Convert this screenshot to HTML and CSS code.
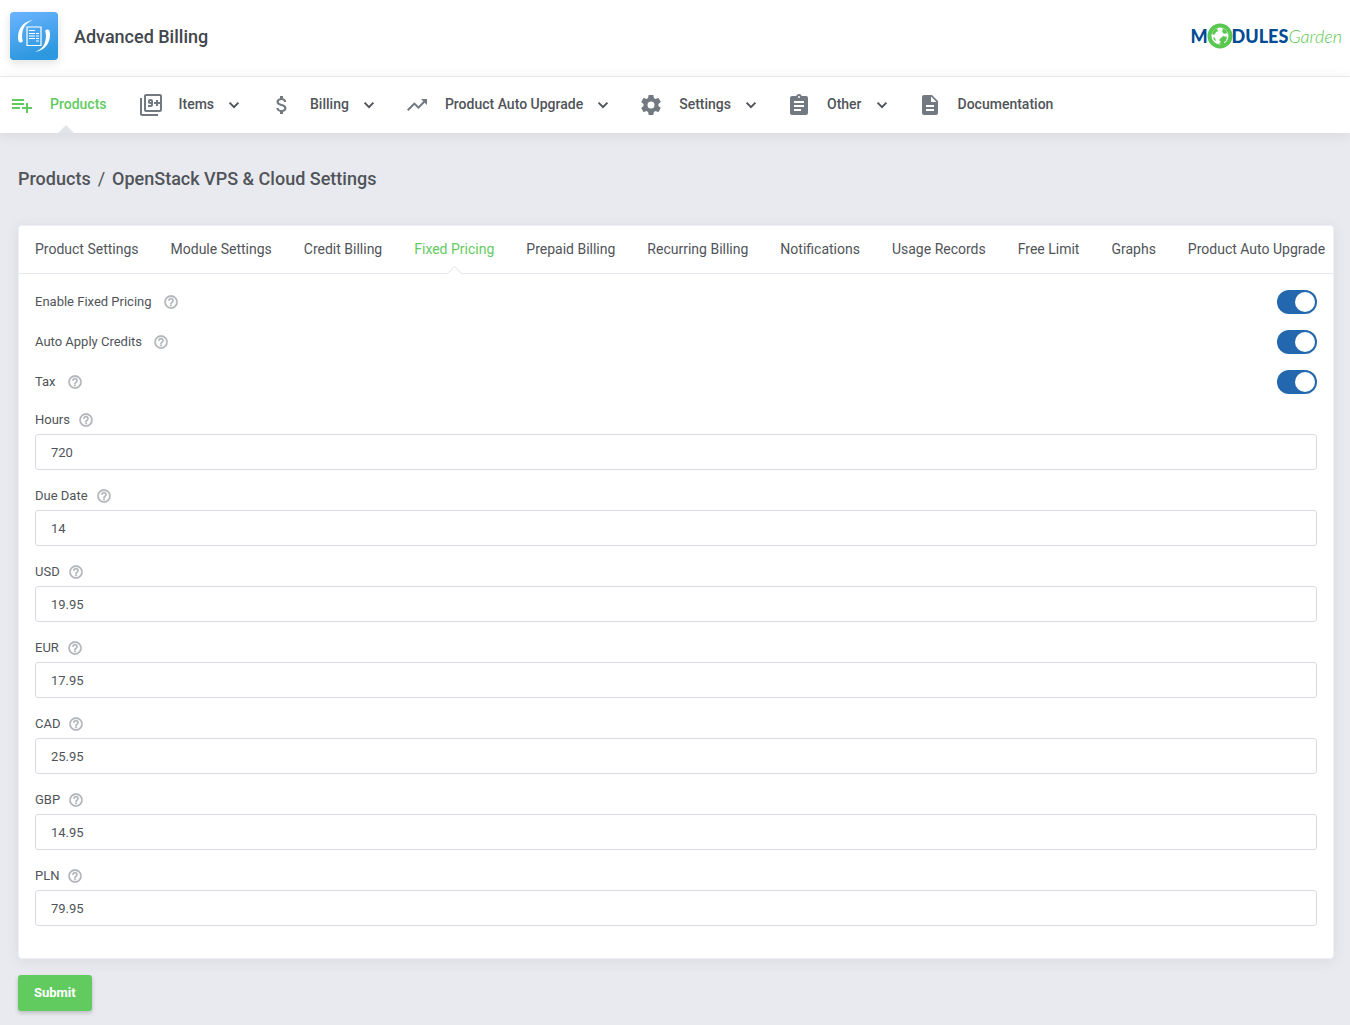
FILE: index.html
```html
<!doctype html>
<html lang="en">
<head>
    <meta charset="UTF-8">
    <title>Advanced Billing</title>
    <link rel="stylesheet" href="styles.css">
</head>

<body>
<svg class="sprite" aria-hidden="true">
    <symbol id="chevron" viewBox="0 0 24 24"><path d="M8.200 9 12 12.800 15.800 9l1.300 1.300-5.100 5.100-5.100-5.100z"/></symbol>
    <symbol id="help" viewBox="0 0 24 24"><path stroke="currentColor" stroke-width=".6" d="M11 18h2v-2h-2v2zm1-16a10 10 0 1 0 0 20 10 10 0 0 0 0-20zm0 18a8 8 0 1 1 0-16 8 8 0 0 1 0 16zm0-14a4 4 0 0 0-4 4h2a2 2 0 1 1 4 0c0 2-3 1.750-3 5h2c0-2.250 3-2.500 3-5a4 4 0 0 0-4-4z"/></symbol>
</svg>

<header class="header">
    <div class="brand">
        <svg class="brand-icon" viewBox="0 0 48 48" aria-hidden="true">
            <defs>
                <linearGradient id="brand-bg" x1="0" y1="0" x2=".3" y2="1">
                    <stop offset="0" stop-color="#6bb4ff"/>
                    <stop offset="1" stop-color="#2d98df"/>
                </linearGradient>
            </defs>
            <rect width="48" height="48" rx="3" fill="url(#brand-bg)"/>
            <g fill="#fff">
                <path d="M23 8.300C14 9 8 16 8 25c0 2 .3 3.500.8 4.700.8 1.300 3.700 1 4-.7-.4-1.300-.9-3.500-.7-6C12.500 16 16 10.500 23 8.300z"/>
                <path d="M25 39.700C34 39 40 32 40 23c0-2-.3-3.500-.8-4.700-.8-1.300-3.700-1-4 .7.4 1.300.9 3.500.7 6C35.500 32 32 37.500 25 39.700z"/>
                <path d="M19 18h6v1h-6zm0 3h6v1h-6zm0 2.500h6v1h-6zm0 2.500h6v1h-6zm7-5h3v1h-3zm0 2.500h3v1h-3zm0 2.500h3v1h-3zm0 2.500h3v1h-3z"/>
            </g>
            <path d="M17 15h14v18.500H17z" fill="none" stroke="#fff" stroke-width="1.200"/>
        </svg>
        <span class="brand-name">Advanced Billing</span>
    </div>
    <a class="logo" href="#">
        <span class="logo-bold">M</span>
        <svg class="logo-globe" viewBox="0 0 26 26" aria-hidden="true">
            <circle cx="13" cy="13" r="10.500" fill="#fff" stroke="#5ac850" stroke-width="4"/>
            <path fill="#5ac850" d="M5 10l3-4 3-1-1 2 2 1-3 1-1 2-2 1zM15 5l4 2 2 4-2-1-1 1-2-1-1-2 1-1zM14 15l2-2 4 1-1 4-2 1v2l-3 1-2-2 2-1-2-2zM6 14l2 1 1 3-2-1z"/>
        </svg>
        <span class="logo-bold">DULES</span><span class="logo-thin">Garden</span>
    </a>
</header>

<nav class="nav">
    <a class="nav-item active" href="#">
        <svg class="nav-icon" viewBox="0 0 24 24"><path d="M14 10H2v2h12v-2zm0-4H2v2h12V6zm4 8v-4h-2v4h-4v2h4v4h2v-4h4v-2h-4zM2 16h8v-2H2v2z"/></svg>
        <span class="nav-label">Products</span>
    </a>
    <a class="nav-item" href="#">
        <svg class="nav-icon" viewBox="0 0 24 24"><path d="M3 5H1v16c0 1.100.9 2 2 2h16v-2H3V5zm11 7V8a2 2 0 0 0-2-2h-1a2 2 0 0 0-2 2v1c0 1.100.9 2 2 2h1v1H9v2h3a2 2 0 0 0 2-2zm-3-3V8h1v1h-1zm10-8H7a2 2 0 0 0-2 2v14c0 1.100.9 2 2 2h14a2 2 0 0 0 2-2V3a2 2 0 0 0-2-2zm0 8h-2V7h-2v2h-2v2h2v2h2v-2h2v6H7V3h14v6z"/></svg>
        <span class="nav-label">Items</span>
        <svg class="nav-arrow"><use href="#chevron"/></svg>
    </a>
    <a class="nav-item" href="#">
        <svg class="nav-icon" viewBox="0 0 24 24"><path d="M11.800 10.900c-2.270-.59-3-1.200-3-2.150 0-1.090 1.010-1.850 2.700-1.850 1.780 0 2.440.85 2.500 2.100h2.210c-.07-1.720-1.120-3.300-3.210-3.810V3h-3v2.160c-1.940.42-3.500 1.680-3.500 3.610 0 2.310 1.910 3.460 4.700 4.130 2.500.6 3 1.480 3 2.410 0 .69-.49 1.790-2.700 1.790-2.060 0-2.870-.92-2.980-2.100h-2.200c.12 2.190 1.760 3.420 3.680 3.830V21h3v-2.150c1.950-.37 3.500-1.500 3.500-3.550 0-2.840-2.430-3.810-4.700-4.400z"/></svg>
        <span class="nav-label">Billing</span>
        <svg class="nav-arrow"><use href="#chevron"/></svg>
    </a>
    <a class="nav-item" href="#">
        <svg class="nav-icon" viewBox="0 0 24 24"><path d="M16 6l2.290 2.290-4.880 4.880-4-4L2 16.590 3.410 18l6-6 4 4 6.300-6.290L22 12V6z"/></svg>
        <span class="nav-label">Product Auto Upgrade</span>
        <svg class="nav-arrow"><use href="#chevron"/></svg>
    </a>
    <a class="nav-item" href="#">
        <svg class="nav-icon" viewBox="0 0 24 24"><path d="M19.430 12.980c.04-.32.07-.64.07-.98s-.03-.66-.07-.98l2.110-1.650c.19-.15.24-.42.12-.64l-2-3.460c-.12-.22-.39-.3-.61-.22l-2.490 1c-.52-.4-1.080-.73-1.690-.98l-.38-2.650C14.460 2.180 14.250 2 14 2h-4c-.25 0-.46.18-.49.42l-.38 2.650c-.61.25-1.170.59-1.690.98l-2.490-1c-.23-.09-.49 0-.61.22l-2 3.460c-.13.22-.07.49.12.64l2.110 1.650c-.04.32-.07.65-.07.98s.03.66.07.98l-2.110 1.650c-.19.15-.24.42-.12.64l2 3.460c.12.22.39.3.61.22l2.490-1c.52.4 1.080.73 1.690.98l.38 2.650c.03.24.24.42.49.42h4c.25 0 .46-.18.49-.42l.38-2.650c.61-.25 1.170-.59 1.690-.98l2.490 1c.23.09.49 0 .61-.22l2-3.460c.12-.22.07-.49-.12-.64l-2.110-1.650zM12 15.500a3.500 3.500 0 1 1 0-7 3.500 3.500 0 0 1 0 7z"/></svg>
        <span class="nav-label">Settings</span>
        <svg class="nav-arrow"><use href="#chevron"/></svg>
    </a>
    <a class="nav-item" href="#">
        <svg class="nav-icon" viewBox="0 0 24 24"><path d="M19 3h-4.180a3 3 0 0 0-5.640 0H5a2 2 0 0 0-2 2v15a2 2 0 0 0 2 2h14a2 2 0 0 0 2-2V5a2 2 0 0 0-2-2zm-7 0a1 1 0 1 1 0 2 1 1 0 0 1 0-2zm2 15H7v-2h7v2zm3-4H7v-2h10v2zm0-4H7V8h10v2z"/></svg>
        <span class="nav-label">Other</span>
        <svg class="nav-arrow"><use href="#chevron"/></svg>
    </a>
    <a class="nav-item" href="#">
        <svg class="nav-icon" viewBox="0 0 24 24"><path d="M14 2H6a2 2 0 0 0-2 2v16a2 2 0 0 0 2 2h12a2 2 0 0 0 2-2V8l-6-6zm2 16H8v-2h8v2zm0-4H8v-2h8v2zm-3-5V3.500L18.500 9H13z"/></svg>
        <span class="nav-label">Documentation</span>
    </a>
</nav>

<main class="main">
    <h1 class="breadcrumb"><a href="#">Products</a><span class="separator">/</span><span>OpenStack VPS &amp; Cloud Settings</span></h1>

    <form>
        <div class="card">
            <div class="tabs">
                <a class="tab" href="#">Product Settings</a>
                <a class="tab" href="#">Module Settings</a>
                <a class="tab" href="#">Credit Billing</a>
                <a class="tab active" href="#">Fixed Pricing</a>
                <a class="tab" href="#">Prepaid Billing</a>
                <a class="tab" href="#">Recurring Billing</a>
                <a class="tab" href="#">Notifications</a>
                <a class="tab" href="#">Usage Records</a>
                <a class="tab" href="#">Free Limit</a>
                <a class="tab" href="#">Graphs</a>
                <a class="tab" href="#">Product Auto Upgrade</a>
            </div>

            <div class="card-body">
                <div class="switch-row">
                    <label for="enable">Enable Fixed Pricing</label>
                    <svg class="help"><use href="#help"/></svg>
                    <input class="switch" type="checkbox" id="enable" checked>
                </div>
                <div class="switch-row">
                    <label for="credits">Auto Apply Credits</label>
                    <svg class="help"><use href="#help"/></svg>
                    <input class="switch" type="checkbox" id="credits" checked>
                </div>
                <div class="switch-row">
                    <label for="tax">Tax</label>
                    <svg class="help"><use href="#help"/></svg>
                    <input class="switch" type="checkbox" id="tax" checked>
                </div>

                <div class="fields">
                    <div class="field">
                        <div class="field-head"><label for="hours">Hours</label><svg class="help"><use href="#help"/></svg></div>
                        <input class="text-input" type="text" id="hours" value="720">
                    </div>
                    <div class="field">
                        <div class="field-head"><label for="due-date">Due Date</label><svg class="help"><use href="#help"/></svg></div>
                        <input class="text-input" type="text" id="due-date" value="14">
                    </div>
                    <div class="field">
                        <div class="field-head"><label for="usd">USD</label><svg class="help"><use href="#help"/></svg></div>
                        <input class="text-input" type="text" id="usd" value="19.95">
                    </div>
                    <div class="field">
                        <div class="field-head"><label for="eur">EUR</label><svg class="help"><use href="#help"/></svg></div>
                        <input class="text-input" type="text" id="eur" value="17.95">
                    </div>
                    <div class="field">
                        <div class="field-head"><label for="cad">CAD</label><svg class="help"><use href="#help"/></svg></div>
                        <input class="text-input" type="text" id="cad" value="25.95">
                    </div>
                    <div class="field">
                        <div class="field-head"><label for="gbp">GBP</label><svg class="help"><use href="#help"/></svg></div>
                        <input class="text-input" type="text" id="gbp" value="14.95">
                    </div>
                    <div class="field">
                        <div class="field-head"><label for="pln">PLN</label><svg class="help"><use href="#help"/></svg></div>
                        <input class="text-input" type="text" id="pln" value="79.95">
                    </div>
                </div>
            </div>
        </div>
        <button class="submit" type="submit">Submit</button>
    </form>
</main>

</body>

</html>
```
FILE: styles.css
```css
* {
    box-sizing: border-box;
}
body {
    margin: 0;
    background: #e9eaef;
    color: #505459;
    font-family: Roboto, "Liberation Sans", sans-serif;
    font-size: 13px;
    line-height: 20px;
}
a {
    color: inherit;
    text-decoration: none;
}
svg {
    flex: none;
    fill: currentColor;
}
.sprite {
    display: none;
}

/* header */
.header {
    display: flex;
    align-items: center;
    justify-content: space-between;
    padding: 12px 8px 16px 10px;
    background: #fff;
    border-bottom: 1px solid #eeeff2;
}
.brand {
    display: flex;
    align-items: center;
    gap: 16px;
}
.brand-icon {
    width: 48px;
    height: 48px;
    border-radius: 3px;
    box-shadow: 0 3px 10px rgba(0, 0, 0, .12);
}
.brand-name {
    padding-top: 2px;
    color: #43474c;
    font-size: 18px;
    font-weight: 500;
    line-height: 24px;
}
.logo {
    display: flex;
    align-items: center;
    font-family: Lato, sans-serif;
    font-size: 18px;
    line-height: 24px;
}
.logo-bold {
    color: #004b93;
    font-weight: 900;
}
.logo-globe {
    width: 26px;
    height: 26px;
    margin: 0 -1px;
}
.logo-thin {
    color: #5ac850;
    font-style: italic;
    font-weight: 300;
}

/* main navigation */
.nav {
    position: relative;
    display: flex;
    gap: 24px;
    height: 56px;
    padding: 0 10px;
    background: #fff;
    box-shadow: 0 2px 12px rgba(60, 65, 80, .1);
}
.nav-item {
    position: relative;
    display: flex;
    align-items: center;
    color: #505459;
    font-size: 14px;
    font-weight: 500;
    white-space: nowrap;
}
.nav-icon {
    width: 24px;
    height: 24px;
    margin-right: 8px;
    color: #737980;
}
.nav-label {
    padding: 0 8px 2px;
}
.nav-arrow {
    width: 24px;
    height: 24px;
}
.nav-item.active,
.nav-item.active .nav-icon {
    color: #62cb5f;
}
.nav-item.active::after {
    content: "";
    position: absolute;
    bottom: 0;
    left: calc(50% - 4px);
    border: 8px solid transparent;
    border-top: 0;
    border-bottom-color: #e3e4e9;
}

/* content */
.main {
    padding: 34px 16px 14px 18px;
}
.breadcrumb {
    display: flex;
    gap: 7px;
    margin: 0 0 34px;
    font-size: 18px;
    font-weight: 500;
    line-height: 24px;
}
.separator {
    font-weight: 400;
}
.card {
    overflow: hidden;
    background: #fff;
    border: 1px solid #eff0f3;
    border-radius: 4px;
    box-shadow: 0 2px 14px rgba(60, 65, 80, .09);
}
.tabs {
    display: flex;
    height: 48px;
    border-bottom: 1px solid #e7e8ee;
}
.tab {
    position: relative;
    flex: none;
    padding: 0 16px;
    font-size: 14px;
    line-height: 46px;
}
.tab.active {
    color: #62cb5f;
}
.tab.active::after {
    content: "";
    position: absolute;
    bottom: -6px;
    left: calc(50% - 5px);
    width: 10px;
    height: 10px;
    background: #fff;
    border: solid #e7e8ee;
    border-width: 1px 0 0 1px;
    transform: rotate(45deg);
}
.card-body {
    padding: 8px 16px 32px;
}
.help {
    width: 16px;
    height: 16px;
    color: #b0b3b8;
}
.switch-row {
    display: flex;
    align-items: center;
    gap: 11px;
    height: 40px;
}
.switch {
    appearance: none;
    width: 40px;
    height: 24px;
    margin: 0 0 0 auto;
    padding: 2px;
    background: #2368ae;
    border-radius: 12px;
}
.switch::before {
    content: "";
    display: block;
    width: 20px;
    height: 20px;
    background: #fff;
    border-radius: 50%;
}
.switch:checked::before {
    margin-left: auto;
}
.fields {
    display: grid;
    gap: 16px;
    margin-top: 8px;
}
.field-head {
    display: flex;
    align-items: center;
    gap: 8px;
    height: 24px;
    padding-bottom: 4px;
}
.text-input {
    display: block;
    width: 100%;
    height: 36px;
    padding: 0 15px;
    background: #fff;
    border: 1px solid #d9dbe3;
    border-radius: 3px;
    color: #505459;
    font: inherit;
}
.submit {
    height: 36px;
    margin-top: 16px;
    padding: 0 16px;
    background: #62cb5f;
    border: 0;
    border-radius: 3px;
    box-shadow: 0 2px 4px rgba(0, 0, 0, .2);
    color: #fff;
    font: inherit;
    font-weight: 700;
}
```
